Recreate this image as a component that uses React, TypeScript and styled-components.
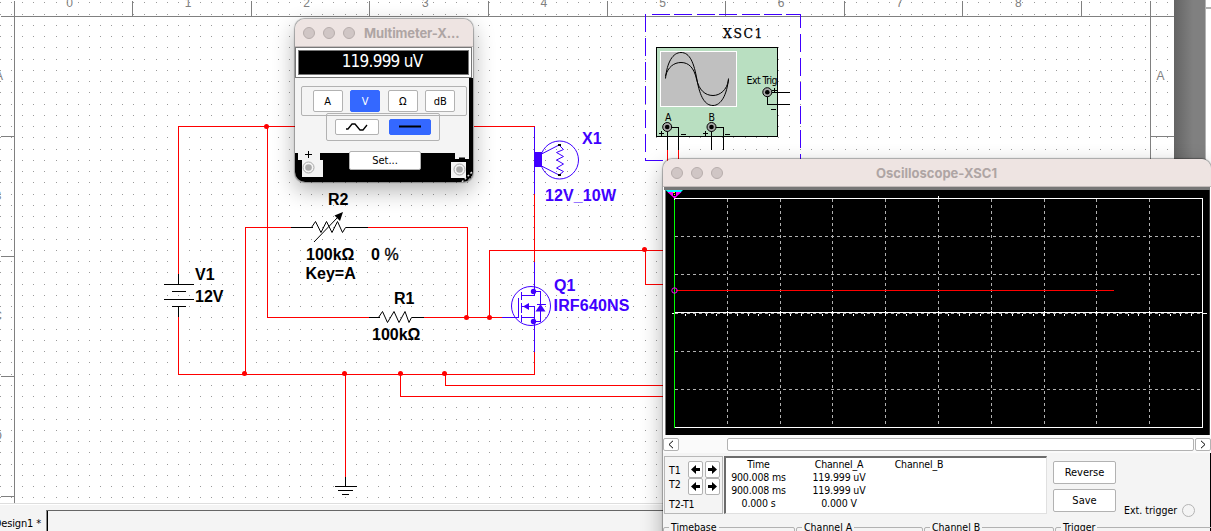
import React from "react";
import styled, { createGlobalStyle } from "styled-components";

const UI = `"DejaVu Sans Condensed", "DejaVu Sans", sans-serif`;
const RED = "#ff0000";
const BLUE = "#4000ff";

const Global = createGlobalStyle`
  html, body { margin: 0; padding: 0; overflow: hidden; }
  *, *::before, *::after { box-sizing: border-box; }
`;

const Screen = styled.div`
  position: relative;
  display: flex;
  flex-direction: column;
  width: 1211px;
  height: 531px;
  overflow: hidden;
  background: #f4f4f4;
  font: 11px/13px ${UI};
  font-stretch: condensed;
  color: #000;
`;

const Workspace = styled.div`
  display: flex;
  height: 503px;
  background: #fff;
`;

const Sheet = styled.svg`
  flex: none;
  width: 1174px;
  height: 503px;
  background: #fff;
`;

const Gutter = styled.div`
  width: 32px;
  background: linear-gradient(90deg, #646464, #808080 19px);
  border-right: 1px solid #b4b4b4;
`;

const SideScroll = styled.div`
  flex: 1;
  background: #fff;
  &::before {
    content: "";
    display: block;
    height: 9px;
    border-bottom: 2px solid #b0b0b0;
  }
`;

const TabBar = styled.div`
  display: flex;
  flex: 1;
  border-top: 1px solid #dedede;
  background: #f4f4f4;
  box-shadow: inset 0 1px #fff;
`;

const TabLabel = styled.div`
  display: flex;
  justify-content: flex-end;
  width: 46px;
  padding: 13px 5px 0 0;
  font-size: 11px;
  letter-spacing: -0.15px;
  white-space: nowrap;
`;

const TabWell = styled.div`
  flex: 1;
  margin-top: 6px;
  border-top: 1px solid #666;
  border-left: 1px solid #8a8a8a;
  box-shadow: inset 1px 0 #000;
`;

const Panel = styled.section<{ $x: number; $y: number; $w: number; $h: number; $r: string }>`
  position: absolute;
  left: ${(p) => p.$x}px;
  top: ${(p) => p.$y}px;
  display: flex;
  flex-direction: column;
  width: ${(p) => p.$w}px;
  height: ${(p) => p.$h}px;
  overflow: hidden;
  border-radius: ${(p) => p.$r};
  background: #f4f4f4;
  box-shadow: 0 0 1px 0.5px rgba(0, 0, 0, 0.3), 0 8px 22px rgba(0, 0, 0, 0.32);
`;

const TitleBar = styled.header<{ $title: number; $track?: number }>`
  display: flex;
  flex: none;
  align-items: center;
  gap: 8px;
  height: 28px;
  padding-left: 8px;
  background: #eee4e2;
  border-bottom: 1px solid #c4bcbb;
  font: 700 13px/16px Inter, sans-serif;
  letter-spacing: ${(p) => p.$track ?? 0}px;
  color: #aea5a4;
  white-space: nowrap;
  & > span {
    margin-left: ${(p) => p.$title}px;
  }
`;

const Light = styled.i`
  width: 12px;
  height: 12px;
  border: 1px solid #b7adac;
  border-radius: 50%;
  background: #d0c6c5;
`;

const Readout = styled.div`
  display: flex;
  flex: none;
  align-items: center;
  justify-content: center;
  height: 29px;
  margin: 1px 2px 0 1px;
  padding: 0 3px 3px 0;
  border: 2px solid #fff;
  outline: 1px solid #777;
  background: #000;
  box-shadow: inset 0 0 0 1px #777;
  color: #fff;
  font: 17px/20px ${UI};
  font-stretch: condensed;
  letter-spacing: -0.75px;
`;

const MeterBody = styled.div`
  display: flex;
  flex: 1;
  flex-direction: column;
  background: #000;
  margin-top: 1px;
`;

const MeterFace = styled.div`
  display: flex;
  flex-direction: column;
  align-items: flex-start;
  width: 174px;
  height: 75px;
  padding-top: 8px;
  background: #f4f4f4;
`;

const Group = styled.div<{ $left: number; $w: number; $h: number; $pull?: number; $gap: number }>`
  display: flex;
  flex: none;
  align-items: center;
  justify-content: center;
  gap: ${(p) => p.$gap}px;
  width: ${(p) => p.$w}px;
  height: ${(p) => p.$h}px;
  margin: ${(p) => p.$pull ?? 0}px 0 0 ${(p) => p.$left}px;
  border: 1px solid #b2b2b2;
  border-radius: 2px;
`;

const Button = styled.button<{ $w: number; $h: number; $on?: boolean }>`
  display: flex;
  flex: none;
  align-items: center;
  justify-content: center;
  width: ${(p) => p.$w}px;
  height: ${(p) => p.$h}px;
  padding: 0;
  border: 1px solid ${(p) => (p.$on ? "#3468ff" : "#b2b2b2")};
  border-radius: 2px;
  background: ${(p) => (p.$on ? "#3468ff" : "#fff")};
  color: ${(p) => (p.$on ? "#fff" : "#000")};
  font: 11px/13px ${UI};
  font-stretch: condensed;
`;

const MeterFoot = styled.div`
  display: flex;
  align-items: flex-start;
  height: 32px;
  margin-top: -2px;
`;

const Jack = styled.svg`
  flex: none;
  display: block;
`;

const Trace = styled.svg`
  flex: none;
  display: block;
  width: 548px;
  height: 248px;
`;

const ScrollRow = styled.div`
  display: flex;
  flex: none;
  height: 18px;
  padding-top: 3px;
  background: #fafafa;
`;

const Thumb = styled.div`
  width: 468px;
  height: 13px;
  margin-left: 48px;
  margin-right: 1px;
  border: 1px solid #b2b2b2;
  border-radius: 2px;
  background: #fff;
`;

const Controls = styled.div`
  display: flex;
  flex: none;
  height: 68px;
  padding: 3px 0 0 1px;
  border-right: 1px solid #000;
`;

const CursorBox = styled.div`
  display: flex;
  gap: 3px;
  width: 59px;
  height: 58px;
  padding: 4px 2px 0 4px;
  border: 1px solid #b8b8b8;
`;

const CursorNames = styled.div`
  display: flex;
  flex-direction: column;
  width: 16px;
  padding-top: 3px;
  font-size: 10.5px;
  white-space: nowrap;
  & > span { height: 14px; }
  & > span:last-child { margin-top: 6px; letter-spacing: -0.1px; }
`;

const ArrowGrid = styled.div`
  display: grid;
  grid-template-columns: 15px 15px;
  gap: 0 2px;
  align-content: start;
`;

const Values = styled.div`
  display: grid;
  grid-template-columns: 65px 96px 64px;
  grid-auto-rows: 13px;
  width: 323px;
  height: 58px;
  margin-left: 1px;
  border: 1px solid #e0e0e0;
  border-top: 2px solid #6c6c6c;
  border-left: 2px solid #6c6c6c;
  background: #fff;
  font-size: 10.5px;
  letter-spacing: -0.15px;
  text-align: center;
  white-space: pre;
`;

const Actions = styled.div`
  display: flex;
  flex-direction: column;
  gap: 5px;
  padding: 5px 0 0 6px;
`;

const ExtTrigger = styled.label`
  display: flex;
  align-items: center;
  align-self: flex-end;
  gap: 5px;
  margin: 0 0 4px 8px;
  font-size: 10.5px;
  white-space: nowrap;
`;

const Radio = styled.i`
  width: 13px;
  height: 13px;
  border: 1px solid #b4b4b4;
  border-radius: 50%;
`;

const Sections = styled.div`
  display: flex;
  gap: 1px;
  height: 20px;
  border-right: 1px solid #000;
`;

const Section = styled.fieldset<{ $w: number }>`
  flex: none;
  width: ${(p) => p.$w}px;
  height: 24px;
  min-width: 0;
  margin: 0;
  padding: 0 0 0 5px;
  border: 1px solid #b2b2b2;
  border-radius: 2px;
  font-size: 10.5px;
  & > legend { padding: 0 2px; line-height: 13px; white-space: nowrap; }
`;

const Dots = () => {
  let d = "";
  for (let j = -1; j < 44; j++)
    for (let i = -2; i < 104; i++)
      d += `M${Math.floor(22.74 + 11.113 * i)} ${Math.floor(14 + 11.25 * j)}h1v1h-1z`;
  return <path d={d} fill="#9a9a9a" />;
};

const Line = ({ d, c = RED }: { d: string; c?: string }) => (
  <path d={d} transform="translate(.5 .5)" fill="none" stroke={c} shapeRendering="crispEdges" />
);

const Label = ({ x, y, w, c = "#000", children }: { x: number; y: number; w?: number; c?: string; children: string }) => (
  <text x={x} y={y} fill={c} textLength={w} fontFamily="Liberation Sans, sans-serif" fontSize="16" fontWeight="700">
    {children}
  </text>
);

const Small = ({ x, y, w, children }: { x: number; y: number; w?: number; children: string }) => (
  <text x={x} y={y} textLength={w} fontFamily={UI} fontSize="10.5" fontStretch="condensed">
    {children}
  </text>
);

const Frame = () => (
  <g>
    <Line c="#808080" d="M0 16H1174M14 0V503M1150 0V503M132 0V16M251 0V16M369 0V16M488 0V16M607 0V16M725 0V16M844 0V16M962 0V16M1081 0V16M0 136H14M0 256H14M0 376H14M0 496H14M1150 136H1174" />
    <g fill="#808080" fontFamily="Liberation Sans, sans-serif" fontSize="12" textAnchor="middle">
      {Array.from({ length: 9 }, (_, n) => (
        <text key={n} x={69.5 + n * 118.6} y="6.7">{n}</text>
      ))}
      {["A", "B", "C", "D"].map((s, n) => (
        <text key={s} x={n ? -2.5 : -1} y={80 + n * 120}>{s}</text>
      ))}
      <text x="1160.5" y="80">A</text>
    </g>
  </g>
);

const Terminal = ({ x, y }: { x: number; y: number }) => (
  <g>
    <circle cx={x} cy={y} r="4.5" fill="#a8a8a8" stroke="#000" />
    <circle cx={x} cy={y} r="2.3" />
  </g>
);

const ScopeSymbol = () => (
  <g>
    <g fill="none" stroke={BLUE} shapeRendering="crispEdges">
      <path d="M652 14.5H800" strokeDasharray="18 4.4" />
      <path d="M645.5 14V161" strokeDasharray="18 6" />
      <path d="M800.5 14V161" strokeDasharray="18 6" strokeDashoffset="4" />
      <path d="M645 160.5H663" />
    </g>
    <text x="723" y="38" textLength="39.5" fontFamily="DejaVu Serif, serif" fontSize="13.8" stroke="#000" strokeWidth=".25">XSC1</text>
    <rect x="656.5" y="47.5" width="121" height="89" fill="#b9dfc1" stroke="#000" />
    <rect x="660.5" y="51.5" width="76" height="55" fill="#c0c0c0" stroke="#fff" />
    <path d="M665.5 78.5C667 62 673 52.5 681 52.5C690 52.5 694 63 697 80C700 97 705 105.5 713 105.5C721 105.5 727 95 728.5 78.5M665.5 76C668 67 674 62.5 681 62.5C689 62.5 694 68 696.5 79C699 90 705 95.5 713 95.5C720 95.5 727 90 728.5 80" fill="none" stroke="#000" />
    <Line c="#000" d="M667 127V149M667 127H678V149M711 127V149M711 127H723V149M767 92H789M767 92V104H789" />
    <Line d="M667 149V161M678 149V161" />
    <Terminal x={667.2} y={127} />
    <Terminal x={711.5} y={127} />
    <Terminal x={767.3} y={92.2} />
    <Small x={665} y={121}>A</Small>
    <Small x={708.5} y={120.5}>B</Small>
    <Small x={746.5} y={83.5} w={31}>Ext Trig</Small>
    <path d="M659 133.5H664M661.5 131V136M681 134.500H686M703 133.500H708M705.500 131V136M725 134.500H730M772 90.500H777M774.500 88V93M771 109.500H776" stroke="#000" shapeRendering="crispEdges" />
  </g>
);

const Circuit = () => (
  <g>
    <Line d="M178 273V126H295M267 126V317H368M473 126H534M534 193V261M290 227H245V374M367 227H467V317M423 317H501M489 317V250H663M645 250V284H663M178 316V374H534V351M445 374V385H663M400 374V396H663M345 374V476" />
    {[[266.5, 126.5], [466.5, 317.5], [489.5, 317.5], [644.5, 249.5], [244.5, 373.5], [344.5, 373.5], [400.5, 373.5], [444.5, 373.5]].map(([x, y]) => (
      <circle key={`${x}-${y}`} cx={x} cy={y} r="2.5" fill={RED} />
    ))}

    {/* battery and ground */}
    <Line c="#000" d="M178 273V284M163 284H193M171 291H185M163 299H193M171 306H185M178 306V316M345 476V486M334 486H356M337 490H352M341 494H348" />
    <Label x={195} y={280}>V1</Label>
    <Label x={195} y={302}>12V</Label>

    {/* resistors */}
    <Line c="#000" d="M290 227H312M345 227H367M368 317H379M411 317H423" />
    <path d="M311.5 227.5L315.5 221.5L321 232.5L326.5 221.5L332 232.5L337.5 221.5L342.5 232.5L345.5 227.5M314 242L338 217M378.5 317.5L382.5 311.5L387.5 322.5L394 311.5L399 322.5L405 311.5L409 322.5L411.5 317.5" fill="none" stroke="#000" />
    <path d="M343 212L340 221L334.5 215.5Z" />
    <Label x={328} y={205}>R2</Label>
    <Label x={306} y={260}>100kΩ</Label>
    <Label x={371} y={260}>0</Label>
    <text x="384.5" y="260" fontFamily="Liberation Sans, sans-serif" fontSize="16" stroke="#000" strokeWidth=".3">%</text>
    <Label x={305.5} y={279}>Key=A</Label>
    <Label x={394} y={304}>R1</Label>
    <Label x={372} y={340}>100kΩ</Label>

    {/* lamp */}
    <Line c={BLUE} d="M534 126V193" />
    <rect x="534" y="152" width="8" height="15" fill={BLUE} />
    <circle cx="559.5" cy="160" r="19" fill="none" stroke={BLUE} />
    <path d="M541.5 154L559 145L563.5 149.5L556.5 152.5L563.5 156.5L556.5 160L563.5 164L556.5 168L563.5 171.5L559 175L541.5 166" fill="none" stroke={BLUE} />
    <path d="M558 144h3v2h-3zM558 174h3v2h-3z" />
    <Label x={582} y={144} c={BLUE}>X1</Label>
    <Label x={545} y={201} w={71} c={BLUE}>12V_10W</Label>

    {/* transistor */}
    <Line c={BLUE} d="M534 261V295H521M534 291H540V321H534M501 317H518V297M521 291V299M521 302V312M521 314V321M521 306H534V351M521 317H534M536 304H545" />
    <circle cx="531" cy="306" r="19.5" fill="none" stroke={BLUE} />
    <path d="M523 306.5l6-3.5v7zM540.5 304l5 7.5h-10z" fill={BLUE} />
    <circle cx="533.5" cy="291.5" r="2.7" fill={BLUE} />
    <circle cx="533.5" cy="321.5" r="2.7" fill={BLUE} />
    <Label x={554} y={291} c={BLUE}>Q1</Label>
    <Label x={553.5} y={311} w={76} c={BLUE}>IRF640NS</Label>
  </g>
);

const Lights = () => (
  <>
    <Light />
    <Light />
    <Light />
  </>
);

const Multimeter = () => (
  <Panel $x={295} $y={19} $w={178} $h={163} $r="10px">
    <TitleBar $title={1} $track={-0.12}>
      <Lights />
      <span>Multimeter-X...</span>
    </TitleBar>
    <Readout>119.999 uV</Readout>
    <MeterBody>
      <MeterFace>
        <Group $left={6} $w={166} $h={30} $gap={7.5}>
          <Button $w={30} $h={22}>A</Button>
          <Button $w={30} $h={22} $on>V</Button>
          <Button $w={30} $h={22}>Ω</Button>
          <Button $w={30} $h={22}>dB</Button>
        </Group>
        <Group $left={31} $w={114} $h={28} $pull={-3} $gap={10}>
          <Button $w={44} $h={16}>
            <svg width="24" height="12"><path d="M1 8H3L7 3H10L15 9H18L22 4" fill="none" stroke="#000" strokeWidth="1.3" /></svg>
          </Button>
          <Button $w={42} $h={16} $on>
            <svg width="24" height="12"><path d="M1 5.5H23" stroke="#000" strokeWidth="2" /></svg>
          </Button>
        </Group>
      </MeterFace>
      <MeterFoot>
        <Jack width="54" height="32">
          <path d="M3 0H25V9H28V26H7V9H3Z" fill="#f4f4f4" />
          <path d="M10 3.5H17M13.5 0V7" stroke="#000" />
          <circle cx="13.5" cy="16.5" r="5.5" fill="#f4f4f4" stroke="#a8a8a8" />
          <circle cx="13.5" cy="16.5" r="3.3" fill="#aaa" />
        </Jack>
        <Button $w={72} $h={19}>Set...</Button>
        <Jack width="52" height="32">
          <path d="M34 0H48V8H34ZM30 11H45V27H30Z" fill="#f4f4f4" />
          <path d="M38 7.5H44" stroke="#000" strokeWidth="2" />
          <circle cx="38.5" cy="18.5" r="5.5" fill="#f4f4f4" stroke="#a8a8a8" />
          <circle cx="38.5" cy="18.5" r="3.3" fill="#aaa" />
          <path d="M41 31L51 21M45 32L52 25" stroke="#ddd" strokeDasharray="2 2" strokeWidth="1.5" />
        </Jack>
      </MeterFoot>
    </MeterBody>
  </Panel>
);

const COLS = [64, 117, 169, 222, 275, 328, 381, 433, 486];
const ROWS = [49, 87, 126, 164, 202];

const ScopeTrace = () => {
  const ticks = Array.from({ length: 50 }, (_, i) => `M${Math.round(11 + i * 10.55)} 126v2`).join("");
  return (
    <Trace viewBox="0 0 548 248">
      <rect width="548" height="248" fill="#fff" />
      <rect x="1" width="546" height="3" fill="#777" />
      <rect x="2" y="2" width="545" height="246" fill="#777" />
      <rect x="3" y="3" width="543.5" height="245" />
      <Line c="#fff" d="M11 11H539V240H11ZM275 8V13M11 125H539M8 126H11M539 126H543" />
      <g stroke="#b0b0b0" strokeDasharray="3 3" shapeRendering="crispEdges">
        {COLS.map((x) => <path key={x} d={`M${x + 0.5} 12V240`} />)}
        {ROWS.map((y) => <path key={y} d={`M12 ${y + 0.5}H539`} />)}
      </g>
      <Line c="#fff" d={ticks} />
      <Line c="#fff" d={COLS.map((x) => `M${x} 123V128`).join("")} />
      <Line c="#00ff00" d="M11 12V240" />
      <Line d="M12 103H450" />
      <path d="M2.5 3H20L17 6H6Z" fill="#00ffff" />
      <path d="M4.500 5H18.500L11.500 11.500Z" fill="#ff00ff" />
      <path d="M10 5H13V9H10Z" />
      <path d="M10 5h2v1h-2zM11 7h1v1h-1z" fill="#ffff00" />
      <circle cx="11.500" cy="103.500" r="2.700" fill="none" stroke="#ff00ff" />
    </Trace>
  );
};

const Arrow = ({ flip = false }: { flip?: boolean }) => (
  <Button $w={15} $h={17} aria-label={flip ? "right" : "left"}>
    <svg width="11" height="11" viewBox="0 0 11 11">
      <path d="M1 5.5L6 1V4H10V7H6V10Z" transform={flip ? "translate(11 0) scale(-1 1)" : undefined} />
    </svg>
  </Button>
);

const Chevron = ({ flip = false }: { flip?: boolean }) => (
  <Button $w={16} $h={13} aria-label={flip ? "right" : "left"}>
    <svg width="8" height="9"><path d={flip ? "M2 .8L6 4.5L2 8.2" : "M6 .8L2 4.5L6 8.2"} fill="none" stroke="#000" /></svg>
  </Button>
);

const CELLS = ["Time", "Channel_A", "Channel_B", "900.008 ms", "119.999 uV", "", "900.008 ms", "119.999 uV", "", "0.000 s", "0.000 V", ""];

const Oscilloscope = () => (
  <Panel $x={663} $y={159} $w={548} $h={400} $r="10px 10px 0 0">
    <TitleBar $title={145}>
      <Lights />
      <span>Oscilloscope-XSC1</span>
    </TitleBar>
    <ScopeTrace />
    <ScrollRow>
      <Chevron />
      <Thumb />
      <Chevron flip />
    </ScrollRow>
    <Controls>
      <CursorBox>
        <CursorNames>
          <span>T1</span>
          <span>T2</span>
          <span>T2-T1</span>
        </CursorNames>
        <ArrowGrid>
          <Arrow />
          <Arrow flip />
          <Arrow />
          <Arrow flip />
        </ArrowGrid>
      </CursorBox>
      <Values>
        {CELLS.map((c, i) => <span key={i}>{c}</span>)}
      </Values>
      <Actions>
        <Button $w={63} $h={23}>Reverse</Button>
        <Button $w={63} $h={23}>Save</Button>
      </Actions>
      <ExtTrigger>
        Ext. trigger
        <Radio />
      </ExtTrigger>
    </Controls>
    <Sections>
      <Section $w={132}><legend>Timebase</legend></Section>
      <Section $w={127}><legend>Channel A</legend></Section>
      <Section $w={130}><legend>Channel B</legend></Section>
      <Section $w={160}><legend>Trigger</legend></Section>
    </Sections>
  </Panel>
);

export default function App() {
  return (
    <>
      <Global />
      <Screen>
        <Workspace>
          <Sheet viewBox="0 0 1174 503">
            <Dots />
            <Frame />
            <Circuit />
            <ScopeSymbol />
          </Sheet>
          <Gutter />
          <SideScroll />
        </Workspace>
        <TabBar>
          <TabLabel>Design1 *</TabLabel>
          <TabWell />
        </TabBar>
        <Multimeter />
        <Oscilloscope />
      </Screen>
    </>
  );
}
